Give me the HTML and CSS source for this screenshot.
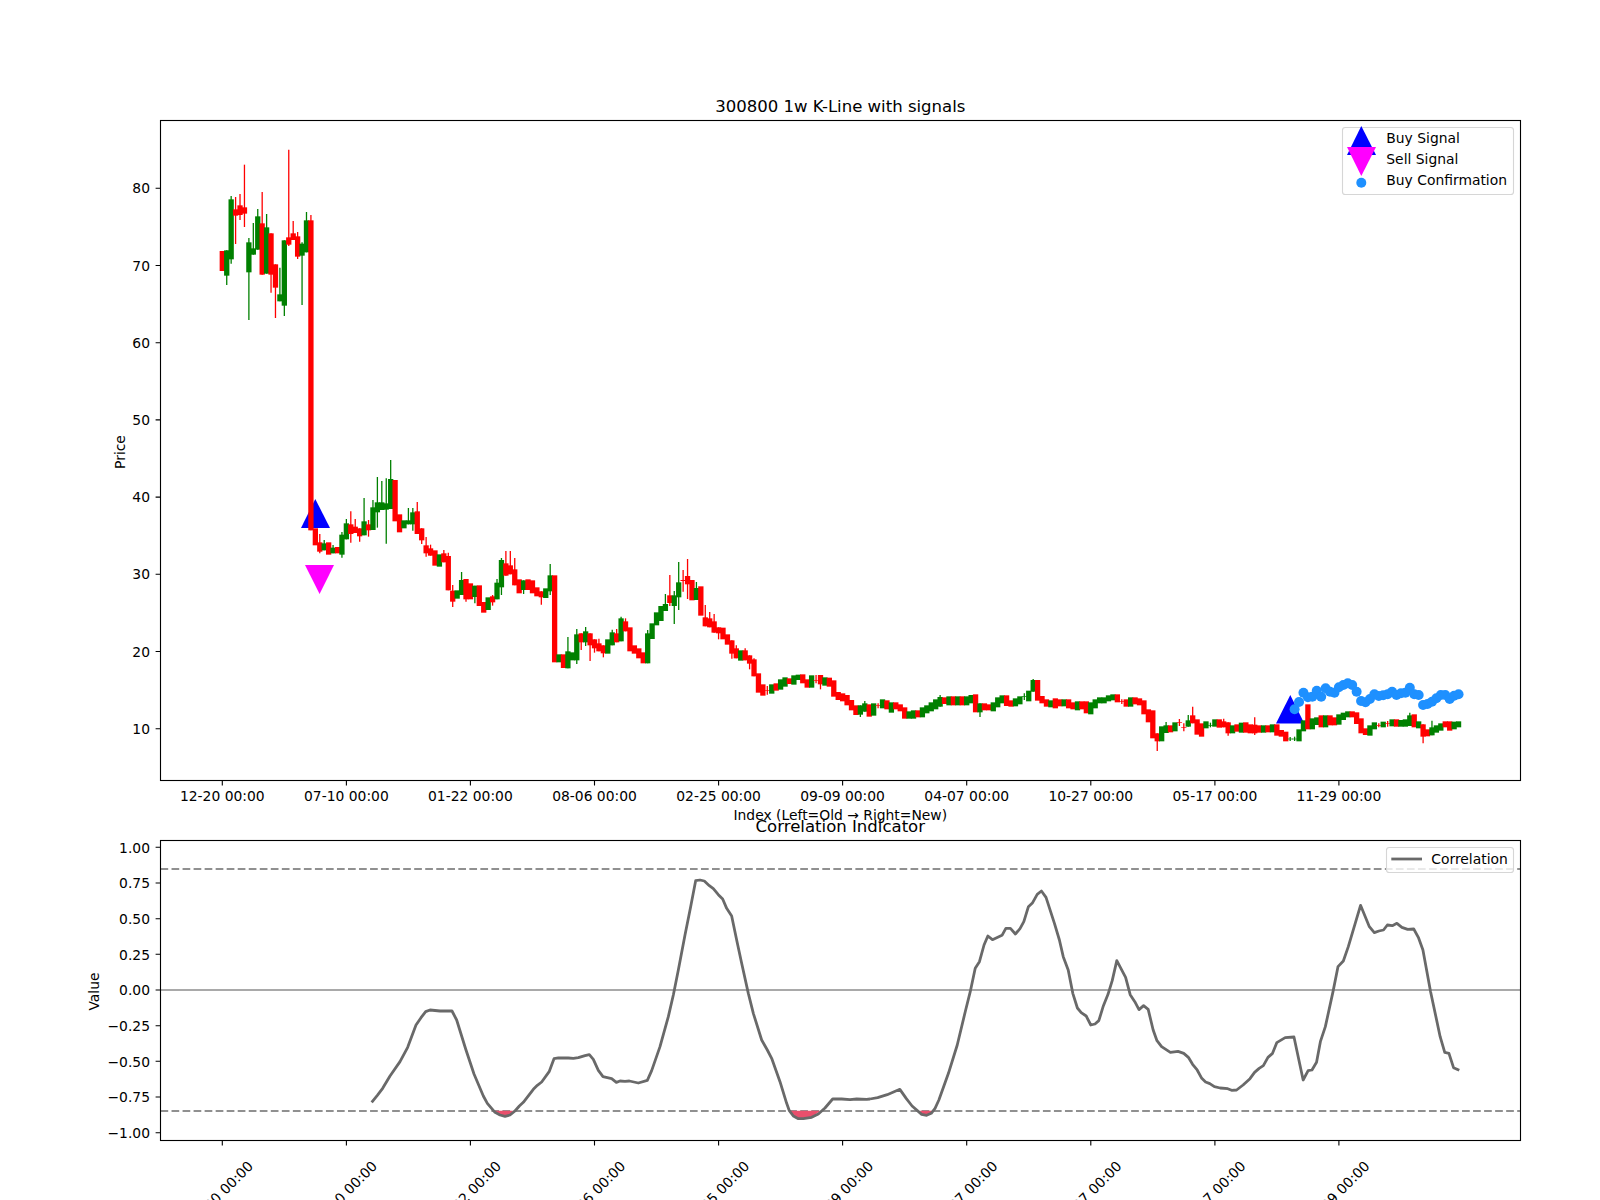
FILE: index.html
```html
<!DOCTYPE html>
<html lang="en">
<head>
<meta charset="utf-8">
<title>300800 1w K-Line with signals</title>
<link rel="stylesheet" href="styles.css">
</head>
<body>
<svg class="figure" width="1600" height="1200" viewBox="0 0 1600 1200" xmlns="http://www.w3.org/2000/svg">
  <!-- K-line axes -->
  <text class="title" x="840.3" y="112">300800 1w K-Line with signals</text>
  <polygon class="buy" points="315.3,499 301,528 330,528"/>
  <polygon class="buy" points="1290.3,695 1276,723.5 1304.3,723.5"/>
  <polygon class="sell" points="305,565 334,565 319.6,594"/>
  <g id="candles"></g>
  <g id="dots"></g>
  <rect class="spine" x="160.5" y="120.5" width="1360" height="660"/>
  <path class="tick" d="M155.6 188.3h5M155.6 265.5h5M155.6 342.7h5M155.6 419.9h5M155.6 497.1h5M155.6 574.3h5M155.6 651.5h5M155.6 728.7h5"/>
  <g class="ylabels">
    <text x="150" y="193.3">80</text><text x="150" y="270.5">70</text><text x="150" y="347.7">60</text><text x="150" y="424.9">50</text>
    <text x="150" y="502.1">40</text><text x="150" y="579.3">30</text><text x="150" y="656.5">20</text><text x="150" y="733.7">10</text>
  </g>
  <path class="tick" d="M222.3 780.5v5M346.4 780.5v5M470.4 780.5v5M594.5 780.5v5M718.6 780.5v5M842.6 780.5v5M966.7 780.5v5M1090.8 780.5v5M1214.9 780.5v5M1338.9 780.5v5"/>
  <g class="xlabels">
    <text x="222.3" y="800.7">12-20 00:00</text><text x="346.4" y="800.7">07-10 00:00</text><text x="470.4" y="800.7">01-22 00:00</text>
    <text x="594.5" y="800.7">08-06 00:00</text><text x="718.6" y="800.7">02-25 00:00</text><text x="842.6" y="800.7">09-09 00:00</text>
    <text x="966.7" y="800.7">04-07 00:00</text><text x="1090.8" y="800.7">10-27 00:00</text><text x="1214.9" y="800.7">05-17 00:00</text>
    <text x="1338.9" y="800.7">11-29 00:00</text>
  </g>
  <text class="axis-label" x="840.3" y="820">Index (Left=Old → Right=New)</text>
  <text class="axis-label" transform="rotate(-90 125 452)" x="125" y="452">Price</text>
  <rect class="legend" x="1342.5" y="127.5" width="171" height="67" rx="2.8"/>
  <polygon class="buy" points="1361.3,126 1347,155 1376,155"/>
  <polygon class="sell" points="1347,147 1376,147 1361.3,176"/>
  <circle class="dot" cx="1361.3" cy="182.7" r="5"/>
  <text class="legend-text" x="1386.3" y="143.3">Buy Signal</text>
  <text class="legend-text" x="1386.3" y="164.3">Sell Signal</text>
  <text class="legend-text" x="1386.3" y="185.3">Buy Confirmation</text>

  <!-- Correlation axes -->
  <text class="title" x="840.3" y="832">Correlation Indicator</text>
  <line class="dash" x1="160.5" x2="1520.5" y1="869" y2="869"/>
  <line class="dash" x1="160.5" x2="1520.5" y1="1111" y2="1111"/>
  <line class="zero" x1="160.5" x2="1520.5" y1="990" y2="990"/>
  <g transform="translate(360 860) scale(0.33333)">
    <polygon class="low-fill" points="405,752 420,765 435,769 450,765 460,752"/>
    <polygon class="low-fill" points="1288,752 1300,768 1315,776 1330,776 1355,772 1375,757 1382,752"/>
    <path class="corr" d="M35 727L52 706 68 685 90 648 120 605 143 562 168 495 183 473 197 455 210 450 240 453 276 453 290 480 317 567 342 642 370 708 382 730 405 757 420 765 435 769 450 765 465 753 478 738 490 727 520 688 532 676 545 666 568 634 582 596 595 594 625 594 640 595 655 593 675 587 688 584 700 598 715 631 729 650 755 656 769 667 780 663 795 664 808 663 835 669 862 661 875 632 900 560 925 470 940 405 955 330 975 225 992 140 1007 62 1020 60 1033 63 1048 77 1060 86 1075 104 1088 117 1100 145 1115 168 1130 240 1145 310 1165 400 1180 460 1205 540 1222 570 1235 595 1260 665 1280 730 1288 752 1300 768 1315 776 1330 776 1355 772 1375 762 1395 744 1418 717 1445 717 1470 719 1490 717 1520 718 1530 717"/>
  </g>
  <g transform="translate(870 860) scale(0.38265 0.33333)">
    <polygon class="low-fill" points="130,752 135,763 148,766 160,760 166,752"/>
    <path class="corr" d="M0 717L20 713 45 704 78 688 95 716 110 738 135 763 148 766 160 760 170 745 180 720 205 640 228 555 250 450 262 395 275 325 286 305 298 255 308 228 320 239 345 226 355 205 367 205 380 222 392 206 402 185 414 140 425 128 437 103 448 93 460 112 482 190 495 240 505 290 518 330 530 400 542 444 552 458 565 468 577 495 588 492 598 482 610 437 622 403 633 362 645 302 668 352 680 404 692 425 703 449 715 437 727 448 740 510 750 542 762 560 785 577 805 574 820 580 832 592 843 613 855 630 867 655 877 666 888 671 900 680 915 684 935 686 945 691 958 690 975 675 993 656 1005 637 1017 625 1028 617 1040 592 1052 580 1063 548 1085 533 1108 531 1132 660 1145 632 1155 630 1167 607 1177 545 1190 500 1210 395 1223 320 1237 303 1250 260 1282 136 1305 200 1318 218 1330 213 1342 210 1352 195 1365 197 1377 190 1390 202 1405 208 1421 207 1433 232 1445 270 1465 395 1490 530 1502 577 1513 580 1525 623 1540 631"/>
  </g>
  <rect class="spine" x="160.5" y="840.5" width="1360" height="300"/>
  <path class="tick" d="M155.6 847.3h5M155.6 883h5M155.6 918.7h5M155.6 954.3h5M155.6 990h5M155.6 1025.7h5M155.6 1061.3h5M155.6 1097h5M155.6 1132.7h5"/>
  <g class="ylabels">
    <text x="150" y="853">1.00</text><text x="150" y="888.3">0.75</text><text x="150" y="924">0.50</text><text x="150" y="959.6">0.25</text>
    <text x="150" y="995.3">0.00</text><text x="150" y="1031">−0.25</text><text x="150" y="1066.6">−0.50</text><text x="150" y="1102.3">−0.75</text><text x="150" y="1138">−1.00</text>
  </g>
  <path class="tick" d="M222.3 1140.5v5M346.4 1140.5v5M470.4 1140.5v5M594.5 1140.5v5M718.6 1140.5v5M842.6 1140.5v5M966.7 1140.5v5M1090.8 1140.5v5M1214.9 1140.5v5M1338.9 1140.5v5"/>
  <g class="rotated">
    <text transform="rotate(-45 254 1167)" x="254" y="1167">12-20 00:00</text>
    <text transform="rotate(-45 378.1 1167)" x="378.1" y="1167">07-10 00:00</text>
    <text transform="rotate(-45 502.1 1167)" x="502.1" y="1167">01-22 00:00</text>
    <text transform="rotate(-45 626.2 1167)" x="626.2" y="1167">08-06 00:00</text>
    <text transform="rotate(-45 750.3 1167)" x="750.3" y="1167">02-25 00:00</text>
    <text transform="rotate(-45 874.3 1167)" x="874.3" y="1167">09-09 00:00</text>
    <text transform="rotate(-45 998.4 1167)" x="998.4" y="1167">04-07 00:00</text>
    <text transform="rotate(-45 1122.5 1167)" x="1122.5" y="1167">10-27 00:00</text>
    <text transform="rotate(-45 1246.6 1167)" x="1246.6" y="1167">05-17 00:00</text>
    <text transform="rotate(-45 1370.6 1167)" x="1370.6" y="1167">11-29 00:00</text>
  </g>
  <text class="axis-label" transform="rotate(-90 99 991.5)" x="99" y="991.5">Value</text>
  <rect class="legend" x="1386.5" y="847.5" width="127" height="25" rx="2.8"/>
  <line class="corr" x1="1391.3" x2="1422" y1="859" y2="859"/>
  <text class="legend-text" x="1431.3" y="864">Correlation</text>
</svg>
<script src="chart.js"></script>
</body>
</html>
```

FILE: styles.css
```css
html, body {
  margin: 0;
  padding: 0;
  background: #ffffff;
  overflow: hidden;
}
.figure {
  display: block;
  font-family: "DejaVu Sans", sans-serif;
  fill: #000000;
}
.title {
  font-size: 16.55px;
  text-anchor: middle;
}
.axis-label {
  font-size: 13.89px;
  text-anchor: middle;
}
.ylabels text {
  font-size: 13.89px;
  text-anchor: end;
}
.xlabels text {
  font-size: 13.89px;
  text-anchor: middle;
}
.rotated text {
  font-size: 13.89px;
  text-anchor: end;
}
.legend-text {
  font-size: 13.89px;
}
.spine {
  fill: none;
  stroke: #000000;
  stroke-width: 1.11;
}
.tick {
  fill: none;
  stroke: #000000;
  stroke-width: 1.11;
}
.buy {
  fill: #0000ff;
}
.sell {
  fill: #ff00ff;
}
.dot {
  fill: #1e90ff;
}
.legend {
  fill: rgba(255, 255, 255, 0.8);
  stroke: #d6d6d6;
  stroke-width: 1.11;
}
.dash {
  stroke: #909090;
  stroke-width: 2.08;
  stroke-dasharray: 7.7 3.33;
}
.zero {
  stroke: #a9a9a9;
  stroke-width: 2.08;
}
.corr {
  fill: none;
  stroke: #696969;
  stroke-width: 2.78;
  stroke-linejoin: round;
  vector-effect: non-scaling-stroke;
}
.low-fill {
  fill: #e94f6c;
}
.wick-r {
  stroke: #ff0000;
  stroke-width: 1.3;
}
.wick-g {
  stroke: #008000;
  stroke-width: 1.3;
}
.body-r {
  fill: #ff0000;
}
.body-g {
  fill: #008000;
}
```

FILE: chart.js
```js
// Candle rows: colour:bodyTop:bodyBottom[:wickTop[:wickBottom]]
// y values are given at 3x, measured from the group's oy.
var groups = [
  { start: 0, oy: 100, rows: "r:453:513 g:451:527::555 g:298:478:288:491 r:328:347:291:432 r:316:345:282:360 r:322:341:194:381 g:427:517:414:660 g:445:464:369 g:349:449:327 r:370:524:276 g:382:521:342 r:400:524::578 r:493:563::654 g:583:604:503 g:421:617::648 r:412:434:149:438 r:400:420:363 r:409:470:396:477 g:431:467:427:615 g:361:457:336" },
  { start: 20, oy: 400, rows: "r:-539:391:-555 r:385:436 r:427:455:402:460 g:430:451:420 r:427:464 g:443:460:435 r:441:460 g:404:464:396:473 g:370:418:357 r:373:402:334:428 r:380:399:357 r:385:409::425 g:364:406:294 r:373:391:360:410 g:322:390:300 g:307:337:231:383 g:307:330:243 g:310:329:235:431 g:237:327:180 r:240:364 r:343:397 g:361:385 g:361:373:324 g:337:373:324:392 r:334:402:306 r:385:421::432 r:436:460:411:470 r:445:467:434 r:451:497 g:463:500 r:460:487:450 r:468:571:458 r:572:605:555:621 g:571:596 g:540:585:516 r:537:598::605 r:550:598 g:557:591::610 r:556:618 r:606:638 g:592:630 r:589:607:585:617 g:548:598:537" },
  { start: 63, oy: 540, rows: "g:60:142:54:165 r:70:107:33 r:76:103:33 r:88:136:54 r:118:160 g:121:150::162 r:118:150 r:121:160 r:142:169 r:154:172::194 g:145:174 g:106:154:72:165 r:106:367 g:343:367 r:343:384 g:334:385:291 g:337:361 g:283:361:267:372 r:280:307::330 g:274:307:261:318 r:280:316::363 r:298:325::338 r:310:334:296 r:316:340::352 g:298:341 g:277:316:269 r:280:307:267 g:235:304:230 r:244:274:235 r:262:334 r:316:341 r:325:355 r:337:370 g:280:370:270 g:250:297 g:217:256 g:198:243 g:192:213:162 r:166:189:105:198 g:166:198:153:252 g:127:172:66:210 r:120:123:90:155 r:108:133:57:177 r:120:181 g:144:180:126 r:139:227 r:232:259:195 r:235:262:216 r:244:278:222 r:262:280::298 r:263:298 r:283:314 r:301:341::356 r:325:355:316 g:331:362 r:331:361:325 r:346:371::388 r:358:409:355 r:400:458 r:433:467 r:450:452:438:464 g:433:461 r:430:452 g:418:449 g:412:440 r:415:432 g:406:434 g:404:420" },
  { start: 131, oy: 640, rows: "r:103:130 r:118:143 g:106:143 r:120:122:105:130 r:105:133::148 g:112:137 r:113:140 r:121:170 r:156:180 r:160:184 r:165:196 r:180:211 r:196:225 g:196:224::231 g:190:215:183 r:193:230 g:190:227 r:196:198:190:205 g:178:205 r:181:208 g:187:218 r:187:208 r:193:214 r:202:236 g:214:236 g:211:236 r:211:232 g:202:232 g:196:220 g:187:214 g:178:208 g:171:200:165 r:172:192 g:169:196 r:169:196 g:169:196 r:169:196 g:169:196 g:165:190 r:163:217 g:190:217::231 r:190:211 r:193:211 g:187:214 g:172:202 g:166:190 r:166:198 r:181:200 g:175:199 g:169:193 g:168:170:160:180 g:152:184 g:120:155:117 r:120:182 r:168:190 r:178:200 g:181:202 r:175:205 r:178:199 g:178:199 r:178:205 r:187:208 g:184:211 r:184:208 r:184:220 g:187:223 g:178:205 g:172:190 g:172:190 g:166:184 g:163:181 r:163:187 r:184:186:178:192 r:178:200 g:172:200 r:172:193 r:175:196 r:181:223 r:208:247 r:211:295 r:280:304::333 g:259:304 g:256:279:246 r:256:277 g:247:274 r:246:248:237:258 r:261:263:250:274 g:241:260:225 r:226:250:200 r:238:284 r:250:290 g:244:265 g:255:257:248:262 g:238:260 r:238:263 r:244:262:236 r:247:280::287 g:256:280 r:253:275 g:248:278 r:247:278 r:253:280 r:254:280:232:285 r:256:278 g:256:278 r:256:277 g:253:277 r:253:287 r:270:290 r:275:304 g:296:298:291:303 g:296:298:290:303 g:268:304 g:241:274 r:193:268 g:235:268 g:232:255 r:226:262 g:226:262 r:226:256 r:232:256 g:223:254 g:218:240 g:214:232 r:214:232 r:217:252 r:235:280 r:265:285 g:256:287 g:247:268 r:255:257:250:262 g:245:262 r:250:252:243:260 g:238:259 r:238:260 g:240:260 g:238:260 g:226:258:218 r:223:262 g:244:265 r:253:290::310 r:268:289 g:262:286:242 g:256:278 g:250:272 r:244:262 r:244:272 g:245:268 g:244:262" }
];

// Buy confirmation dots: first index 242, y at 3x from oy 640.
var dotY = [208,186,158,172,170,152,170,145,155,158,142,135,130,135,155,183,187,177,163,168,166,163,155,165,160,158,143,163,165,195,192,185,175,165,165,177,167,163];

var NS = "http://www.w3.org/2000/svg";
function xOf(i) { return 222.3 + 4.431 * i; }
function el(name, attrs, parent) {
  var n = document.createElementNS(NS, name);
  for (var k in attrs) n.setAttribute(k, attrs[k]);
  parent.appendChild(n);
  return n;
}

var candles = document.getElementById("candles");
groups.forEach(function (g) {
  g.rows.split(" ").forEach(function (row, n) {
    var p = row.split(":");
    var c = p[0];
    var y = function (v) { return g.oy + Number(v) / 3; };
    var t = y(p[1]), b = y(p[2]);
    var wt = p[3] ? y(p[3]) : t, wb = p[4] ? y(p[4]) : b;
    var x = xOf(g.start + n);
    if (wt < t || wb > b) {
      el("line", { "class": "wick-" + c, x1: x, x2: x, y1: wt, y2: wb }, candles);
    }
    el("rect", { "class": "body-" + c, x: x - 2.65, y: t, width: 5.3, height: b - t }, candles);
  });
});

var dots = document.getElementById("dots");
dotY.forEach(function (v, n) {
  el("circle", { "class": "dot", cx: xOf(242 + n), cy: 640 + v / 3, r: 5 }, dots);
});
```
